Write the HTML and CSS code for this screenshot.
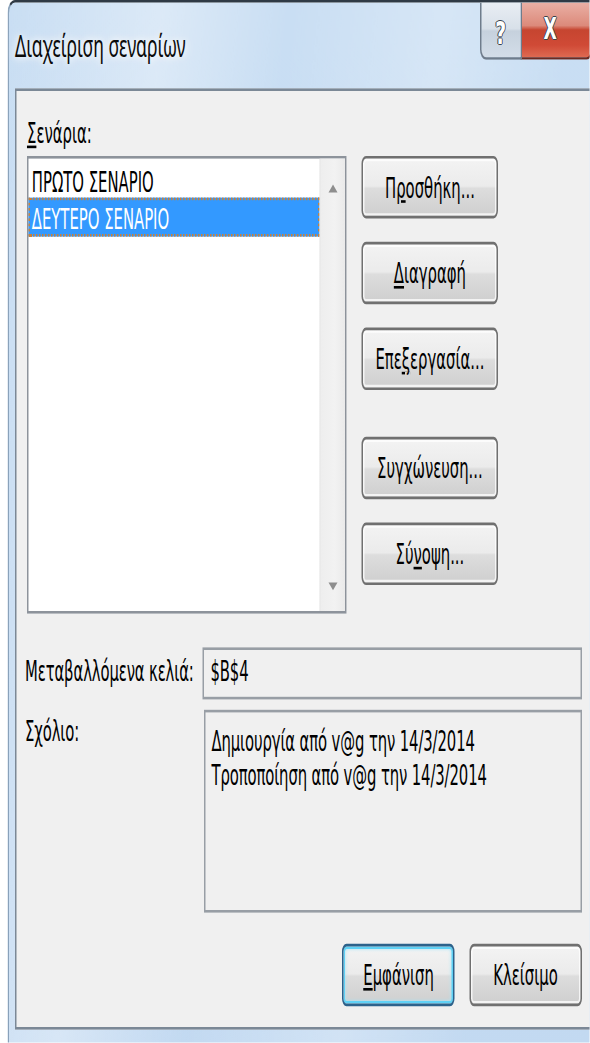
FILE: index.html
```html
<!DOCTYPE html>
<html lang="el">
<head>
<meta charset="utf-8">
<title>Διαχείριση σεναρίων</title>
<link rel="stylesheet" href="styles.css">
</head>
<body>
<div class="screen">
  <div class="window">
    <div class="titlebar">
      <span class="title">Διαχείριση σεναρίων</span>
      <div class="captions">
        <div class="cap help">?</div>
        <div class="cap close">X</div>
      </div>
    </div>
    <div class="client">
      <div class="top">
        <div class="label list-label"><u>Σ</u>ενάρια:</div>
        <div class="listbox">
          <ul class="items">
            <li>ΠΡΩΤΟ ΣΕΝΑΡΙΟ</li>
            <li class="selected">ΔΕΥΤΕΡΟ ΣΕΝΑΡΙΟ</li>
          </ul>
          <div class="scrollbar">
            <span class="arrow up"></span>
            <span class="arrow down"></span>
          </div>
        </div>
        <div class="side-buttons">
          <button class="btn">Π<u>ρ</u>οσθήκη...</button>
          <button class="btn"><u>Δ</u>ιαγραφή</button>
          <button class="btn">Επε<u>ξ</u>εργασία...</button>
          <button class="btn group-start">Συγ<u>χ</u>ώνευση...</button>
          <button class="btn">Σύ<u>ν</u>οψη...</button>
        </div>
      </div>
      <div class="fields">
        <div class="label field-label center">Μεταβαλλόμενα κελιά:</div>
        <div class="field input">$B$4</div>
        <div class="label field-label">Σχόλιο:</div>
        <div class="field comment">Δημιουργία από v@g την 14/3/2014<br>Τροποποίηση από v@g την 14/3/2014</div>
      </div>
      <div class="footer">
        <button class="btn default"><u>Ε</u>μφάνιση</button>
        <button class="btn">Κλείσιμο</button>
      </div>
    </div>
  </div>
</div>
</body>
</html>
```
FILE: styles.css
```css
html, body {
  margin: 0;
  padding: 0;
  background: #fff;
}

body {
  width: 590px;
  height: 1043px;
  overflow: hidden;
}

/* The dialog is drawn at its natural size and stretched to fill the frame */
.screen {
  width: 393.33px;
  height: 401.2px;
  overflow: hidden;
  transform: scale(1.5, 2.6);
  transform-origin: 0 0;
  font-family: "DejaVu Sans Condensed", "DejaVu Sans", sans-serif;
  font-size: 11px;
  line-height: 13px;
  color: #000;
}

.window {
  margin-left: 4.67px;
  width: 396px;
  height: 420px;
  box-sizing: border-box;
  border-top: 1px solid #2f3a45;
  border-left: 1px solid rgba(90, 115, 140, 0.55);
  border-radius: 5px 5px 0 0;
  padding: 0 4.33px;
  background:
    linear-gradient(100deg, rgba(255,255,255,0) 0%, rgba(255,255,255,0.35) 22%, rgba(255,255,255,0) 40%, rgba(255,255,255,0.25) 62%, rgba(255,255,255,0) 80%),
    linear-gradient(180deg, #c9def3 0%, #c2d9f1 100%);
}

/* Title bar */
.titlebar {
  display: flex;
  align-items: flex-start;
  height: 32.85px;
}

.title {
  padding-top: 8.4px;
  font-family: "Noto Sans", "DejaVu Sans", sans-serif;
  font-size: 11.7px;
  line-height: 16px;
  color: #0b0b0b;
  text-shadow: 0 0 4px #fff, 0 0 6px rgba(255,255,255,0.9);
}

.captions {
  display: flex;
  margin-left: auto;
  margin-right: 1.6px;
}

.cap {
  height: 22px;
  box-sizing: border-box;
  display: flex;
  align-items: center;
  justify-content: center;
  font-family: "DejaVu Sans", sans-serif;
  font-weight: bold;
  color: #fff;
  text-shadow: 0.6px 0 0 #3a424c, -0.6px 0 0 #3a424c, 0 0.4px 0 #3a424c, 0 -0.4px 0 #3a424c;
}

.help {
  width: 28px;
  font-size: 12.5px;
  padding-top: 1px;
  border: 1px solid #6f7c8b;
  border-top: none;
  border-radius: 0 0 0 4px;
  background: linear-gradient(180deg, #e9eef4 0%, #d8e0e9 48%, #c6d1dd 52%, #d3dde8 100%);
}

.close {
  width: 47px;
  font-size: 11.5px;
  padding-right: 8px;
  border: 1px solid #6b2a22;
  border-top: none;
  border-left: none;
  border-radius: 0 0 4px 0;
  background: linear-gradient(180deg, #eab0a5 0%, #dc8a7b 42%, #c64530 50%, #d04a36 78%, #de6a52 100%);
}

/* Client area */
.client {
  background: #f0f0f0;
  border: 1px solid #7b8896;
  padding: 9.9px 7px 8.2px 7px;
}

.label {
  line-height: 13px;
}

.top {
  display: grid;
  grid-template-columns: 213.3px 90.7px;
  column-gap: 10px;
  row-gap: 2.75px;
}

.list-label {
  grid-column: 1 / 3;
}

.listbox {
  display: flex;
  height: 175.7px;
  box-sizing: border-box;
  border: 1px solid #8d939b;
  background: #fff;
}

.items {
  flex: 1;
  list-style: none;
  margin: 0;
  padding: 0.5px 0 0 0.5px;
}

.items li {
  height: 14.5px;
  box-sizing: border-box;
  padding: 1.6px 0 0 1.7px;
  line-height: 13px;
  white-space: nowrap;
}

.items li.selected {
  background: #3399ff;
  color: #fff;
  border: 1px dotted #c9823a;
  padding: 0.6px 0 0 0.7px;
}

.scrollbar {
  width: 17px;
  box-sizing: border-box;
  display: flex;
  flex-direction: column;
  justify-content: space-between;
  align-items: center;
  padding: 9.7px 0 8.3px;
  background: linear-gradient(90deg, #e2e2e2 0, #eeeeee 1px, #f2f2f2 60%, #eaeaea 100%);
}

.arrow {
  width: 0;
  height: 0;
  border-left: 3.5px solid transparent;
  border-right: 3.5px solid transparent;
}

.arrow.up {
  border-bottom: 3.4px solid #8e8e8e;
}

.arrow.down {
  border-top: 3.4px solid #8e8e8e;
}

.side-buttons {
  display: flex;
  flex-direction: column;
  gap: 9px;
}

.side-buttons .btn {
  width: 90.7px;
  height: 24px;
}

.side-buttons .group-start {
  margin-top: 8.9px;
}

/* Standard push button */
.btn {
  box-sizing: border-box;
  margin: 0;
  padding: 1px 0 0;
  font: inherit;
  line-height: 13px;
  color: #000;
  border: 1px solid #707070;
  border-radius: 3px;
  background: linear-gradient(180deg, #f3f3f3 0%, #ebebeb 48%, #dddddd 52%, #cfcfcf 100%);
  box-shadow: inset 0 0 0 1px rgba(255, 255, 255, 0.75);
  white-space: nowrap;
}

.btn.default {
  border-color: #2c628b;
  box-shadow: inset 0 0 0 1px #5fd1f5, inset 0 0 2px 1px #a8e6f8;
}

/* Changing cells and comment */
.fields {
  display: grid;
  grid-template-columns: 117.3px 1fr;
  row-gap: 3.8px;
  margin-top: 12.6px;
  letter-spacing: -0.08px;
}

.field-label {
  margin-left: -1.3px;
}

.field-label.center {
  align-self: center;
}

.fields .field-label:not(.center) {
  padding-top: 2.5px;
}

.field {
  box-sizing: border-box;
  border: 1px solid #989ea5;
  background: #f0f0f0;
  padding: 0 4px;
  line-height: 13px;
}

.input {
  height: 20.4px;
  display: flex;
  align-items: center;
}

.comment {
  height: 77.8px;
  margin-left: 0.7px;
  padding-top: 5px;
}

.footer {
  display: flex;
  justify-content: flex-end;
  gap: 10px;
  margin-top: 12.7px;
  padding-right: 0.6px;
}

.footer .btn {
  width: 74.7px;
  height: 23.5px;
}
```
